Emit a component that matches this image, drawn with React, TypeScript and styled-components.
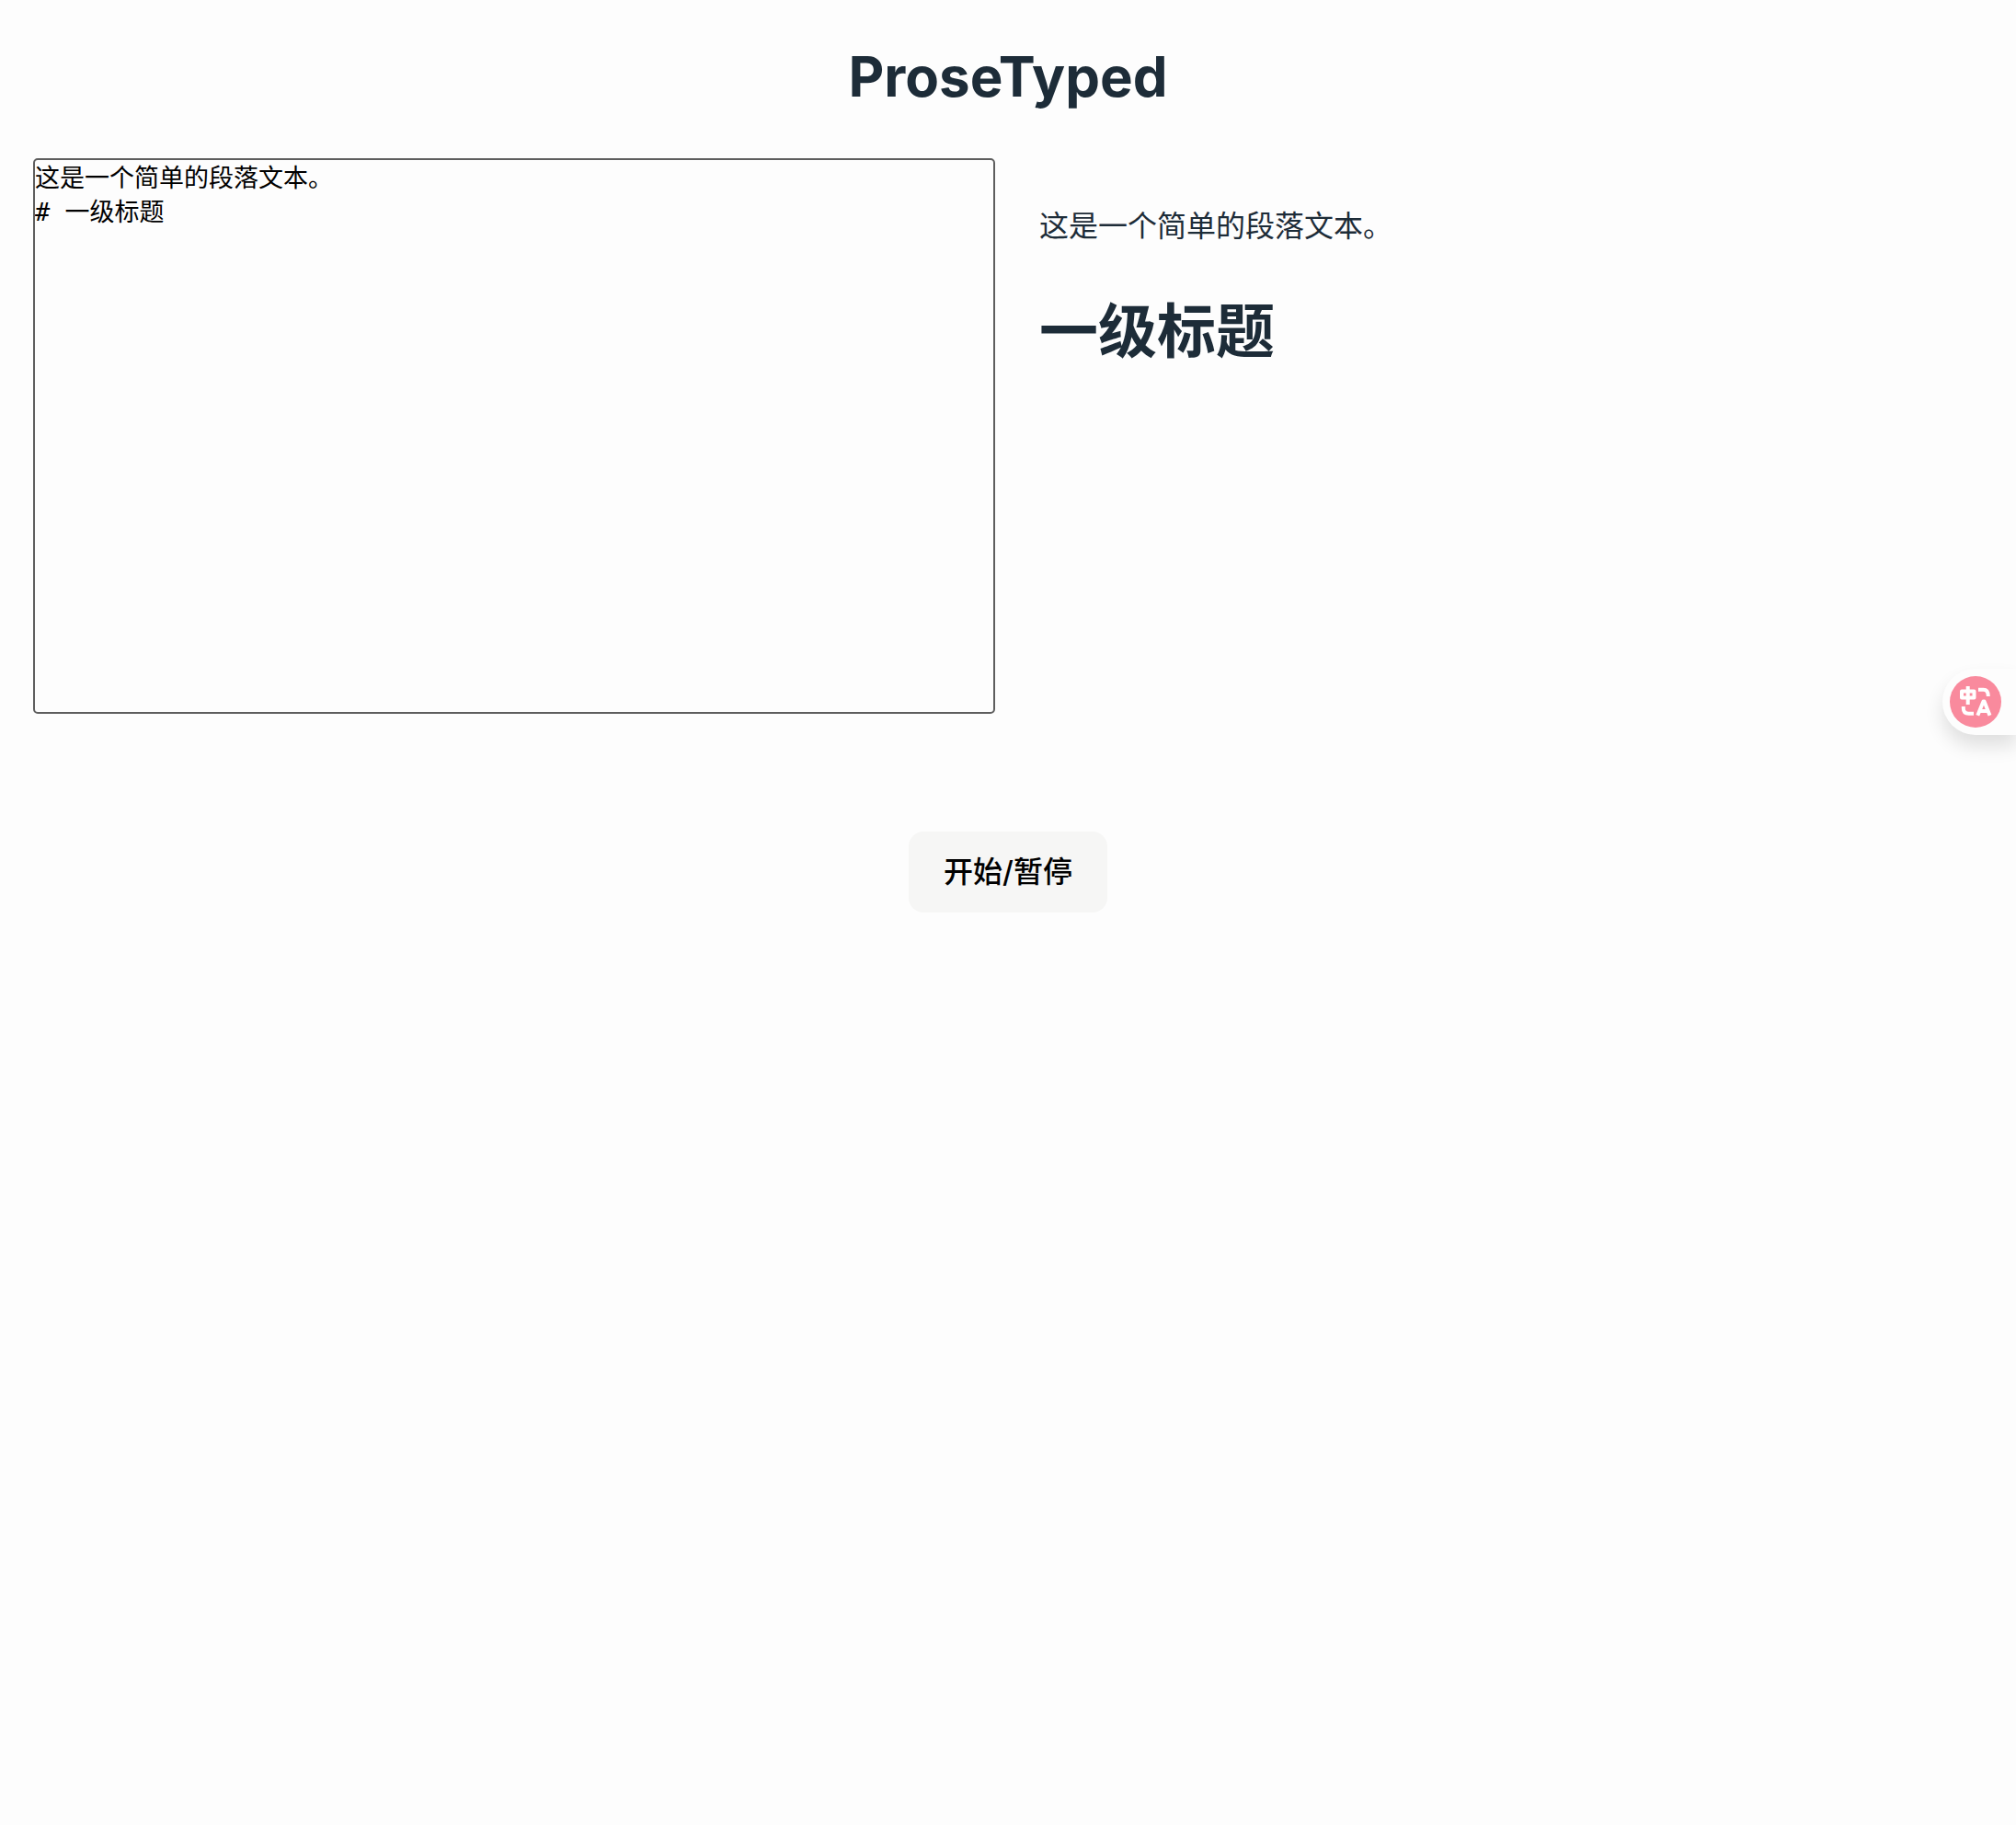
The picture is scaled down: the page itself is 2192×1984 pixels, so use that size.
import React, { useState } from "react";
import styled, { createGlobalStyle } from "styled-components";

const GlobalStyle = createGlobalStyle`
  *, *::before, *::after { box-sizing: border-box; }
  body {
    margin: 0;
    background: #fdfdfd;
    color: #1d2c38;
    font-family: Inter, "Noto Sans CJK SC", sans-serif;
    font-size: 32px;
    line-height: 48px;
  }
`;

const Page = styled.main`
  padding: 48px 36px;
  display: flex;
  flex-direction: column;
  align-items: center;
`;

const Title = styled.h1`
  margin: 0;
  font-size: 60px;
  line-height: 70px;
  font-weight: 700;
`;

const Workspace = styled.div`
  align-self: stretch;
  display: grid;
  grid-template-columns: 1fr 1fr;
  gap: 28px;
  margin: 54px 0 128px;
`;

const Source = styled.textarea`
  display: block;
  width: 100%;
  height: 604px;
  padding: 1px 0;
  border: 2px solid #5e5e5e;
  border-radius: 5px;
  background: transparent;
  color: #000;
  font-family: "DejaVu Sans Mono", "Noto Sans CJK SC", monospace;
  font-size: 27px;
  line-height: 37px;
  resize: none;
  outline: none;
`;

const Preview = styled.article`
  padding: 50px 20px;
`;

const Paragraph = styled.p`
  margin: 0 0 54px;
`;

const Heading = styled.h1`
  margin: 0;
  font-size: 64px;
  line-height: 72px;
  font-weight: 700;
`;

const ToggleButton = styled.button`
  padding: 20px 38px;
  border: 0;
  border-radius: 16px;
  background: #f6f6f5;
  color: #000;
  font: inherit;
  font-weight: 500;
  cursor: pointer;
`;

const TranslateTab = styled.button`
  position: fixed;
  top: 727px;
  right: 0;
  display: flex;
  padding: 8px 16px 8px 8px;
  border: 0;
  border-radius: 36px 0 0 36px;
  background: #fdfdfd;
  box-shadow: 0 12px 20px rgba(0, 0, 0, 0.12);
  cursor: pointer;
`;

const initialText = "这是一个简单的段落文本。\n# 一级标题";

function TranslateIcon() {
  return (
    <svg width="56" height="56" viewBox="0 0 56 56" aria-hidden="true">
      <circle cx="28" cy="28" r="28" fill="#f98a9d" />
      <g fill="none" stroke="#fff" strokeWidth="4" strokeLinejoin="round">
        <path d="M13 16.500h13.500v7H13z" />
        <path d="M19.700 11v20" />
        <path d="M31 14.800h5.500q5.300 0 5.300 7.200" />
        <path d="M14.800 33v2q0 5.800 5.800 5.800H26" />
        <path d="M30.300 42.700L36.500 27.500h1l6 15.200M32.500 38h9" />
      </g>
    </svg>
  );
}

export default function App() {
  const [text, setText] = useState(initialText);
  return (
    <>
      <GlobalStyle />
      <Page>
        <Title>ProseTyped</Title>
        <Workspace>
          <Source
            aria-label="Markdown"
            spellCheck={false}
            value={text}
            onChange={(event) => setText(event.target.value)}
          />
          <Preview>
            {text.split("\n").map((line, index) =>
              line.startsWith("# ") ? (
                <Heading key={index}>{line.slice(2)}</Heading>
              ) : (
                <Paragraph key={index}>{line}</Paragraph>
              )
            )}
          </Preview>
        </Workspace>
        <ToggleButton type="button">开始/暂停</ToggleButton>
      </Page>
      <TranslateTab type="button" aria-label="翻译">
        <TranslateIcon />
      </TranslateTab>
    </>
  );
}
